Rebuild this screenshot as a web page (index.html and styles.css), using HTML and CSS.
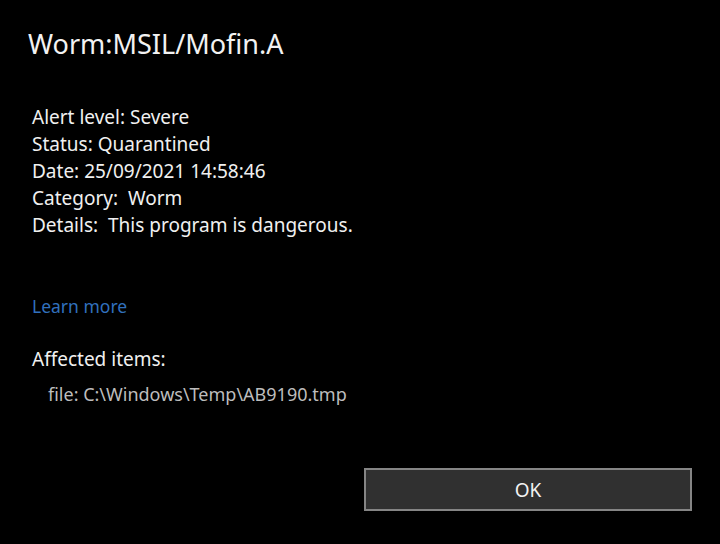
FILE: index.html
```html
<!DOCTYPE html>
<html>
<head>
<meta charset="utf-8">
<link rel="stylesheet" href="styles.css">
</head>
<body>
<div class="dialog">
  <h1 class="title">Worm:MSIL/Mofin.A</h1>
  <div class="details">
    <div class="row">Alert level: Severe</div>
    <div class="row">Status: Quarantined</div>
    <div class="row">Date: 25/09/2021 14:58:46</div>
    <div class="row">Category:&nbsp; Worm</div>
    <div class="row">Details:&nbsp; This program is dangerous.</div>
  </div>
  <a class="learn" href="#">Learn more</a>
  <div class="affected">Affected items:</div>
  <div class="file">file: C:\Windows\Temp\AB9190.tmp</div>
  <div class="actions">
    <button class="ok">OK</button>
  </div>
</div>
</body>
</html>
```
FILE: styles.css
```css
html, body {
  margin: 0;
  padding: 0;
  background: #000;
}
body {
  width: 720px;
  height: 544px;
  overflow: hidden;
  font-family: "Noto Sans", "Open Sans", sans-serif;
  color: #fff;
}
.dialog {
  display: flex;
  flex-direction: column;
  padding: 26px 28px 0 28px;
}
.title {
  margin: 0;
  font-weight: 400;
  font-size: 27px;
  line-height: 36px;
  color: #f2f2f2;
}
.details {
  margin-top: 42px;
  padding-left: 4px;
  font-size: 19px;
  line-height: 27px;
  color: #f0f0f0;
}
.learn {
  margin-top: 54px;
  padding-left: 4px;
  font-size: 17.5px;
  line-height: 27px;
  color: #3170bd;
  text-decoration: none;
  align-self: flex-start;
}
.affected {
  margin-top: 26px;
  padding-left: 4px;
  font-size: 19px;
  line-height: 27px;
  color: #f0f0f0;
}
.file {
  margin-top: 8px;
  padding-left: 20px;
  font-size: 18px;
  line-height: 26px;
  color: #bdbdbd;
}
.actions {
  display: flex;
  justify-content: flex-end;
  margin-top: 61px;
}
.ok {
  box-sizing: border-box;
  width: 328px;
  height: 43px;
  background: #303030;
  border: 2px solid #858585;
  color: #f2f2f2;
  font-family: "Noto Sans", "Open Sans", sans-serif;
  font-size: 19px;
  padding: 0;
}
```
